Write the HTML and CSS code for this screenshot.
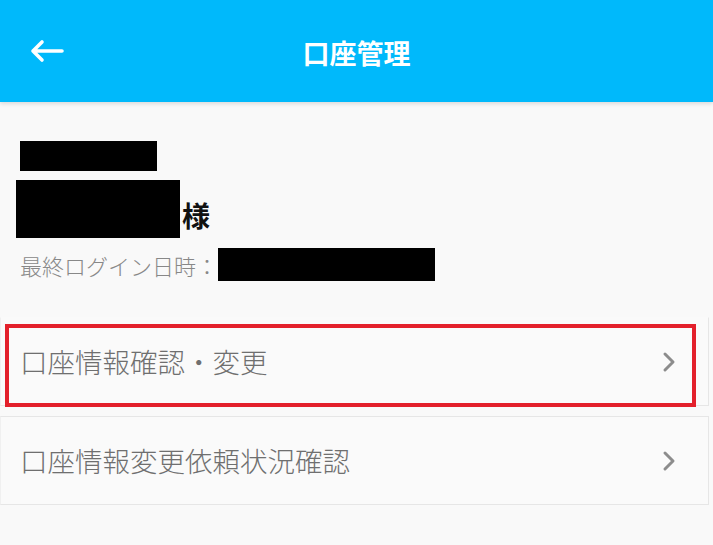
FILE: index.html
```html
<!DOCTYPE html>
<html lang="ja">
<head>
	<meta charset="UTF-8">
	<title>口座管理</title>
	<link rel="stylesheet" href="styles.css">
</head>
<body>
	<div class="header">
		<a href="javascript:;" class="back">
			<svg width="36" height="24" viewBox="0 0 36 24">
				<path d="M33 12H4M13 3L4 12L13 21" fill="none" stroke="#fff" stroke-width="3.6" stroke-linecap="round" stroke-linejoin="round"/>
			</svg>
		</a>
		<h1 class="title">口座管理</h1>
	</div>

	<div class="profile">
		<div class="mask mask-id"></div>
		<div class="name">
			<div class="mask mask-name"></div>
			<span class="sama">様</span>
		</div>
		<div class="login">
			<span class="login-label">最終ログイン日時：</span>
			<div class="mask mask-date"></div>
		</div>
	</div>

	<ul class="menu">
		<li class="menu-item first">
			<span class="menu-text">口座情報確認・変更</span>
			<svg class="chevron" width="14" height="22" viewBox="0 0 14 22">
				<path d="M3 3L11 11L3 19" fill="none" stroke="#8c8c8c" stroke-width="3" stroke-linecap="round" stroke-linejoin="round"/>
			</svg>
			<div class="highlight"></div>
		</li>
		<li class="menu-item">
			<span class="menu-text">口座情報変更依頼状況確認</span>
			<svg class="chevron" width="14" height="22" viewBox="0 0 14 22">
				<path d="M3 3L11 11L3 19" fill="none" stroke="#8c8c8c" stroke-width="3" stroke-linecap="round" stroke-linejoin="round"/>
			</svg>
		</li>
	</ul>
</body>
</html>
```

FILE: styles.css
```css
* {
	margin: 0;
	padding: 0;
	box-sizing: border-box;
}

body {
	width: 713px;
	height: 545px;
	overflow: hidden;
	background: #f9f9f9;
	font-family: "Noto Sans CJK JP", "Noto Sans", sans-serif;
}

.header {
	position: relative;
	display: flex;
	align-items: center;
	justify-content: center;
	height: 102px;
	background: #00b9fb;
	box-shadow: 0 2px 4px rgba(0,0,0,0.12);
}

.back {
	position: absolute;
	left: 29px;
	top: 39px;
	display: block;
	width: 36px;
	height: 24px;
}

.back svg {
	display: block;
}

.title {
	margin-top: 2px;
	font-size: 27px;
	font-weight: bold;
	line-height: 1;
	color: #fff;
}

.profile {
	padding: 39px 0 0 20px;
}

.mask {
	background: #000;
}

.mask-id {
	width: 137px;
	height: 30px;
}

.name {
	display: flex;
	align-items: flex-end;
	margin: 9px 0 0 -4px;
}

.mask-name {
	width: 164px;
	height: 58px;
}

.sama {
	margin: 0 0 9px 2px;
	font-size: 28px;
	font-weight: bold;
	line-height: 1;
	color: #111;
}

.login {
	display: flex;
	align-items: center;
	margin-top: 10px;
}

.login-label {
	font-size: 22px;
	font-weight: 300;
	line-height: 1;
	color: #888;
}

.mask-date {
	width: 217px;
	height: 33px;
}

.menu {
	list-style: none;
	margin-top: 36px;
}

.menu-item {
	position: relative;
	display: flex;
	align-items: center;
	justify-content: space-between;
	height: 89px;
	margin: 0 4px 10px 0;
	padding: 0 32px 0 19px;
	background: #fafafa;
	border: 1px solid #e6e6e6;
	border-left-color: #f0f0f0;
}

.menu-item.first {
	border-top-color: transparent;
}

.menu-text {
	font-size: 27.5px;
	font-weight: 300;
	line-height: 1;
	color: #6f6f6f;
}

.chevron {
	display: block;
}

.highlight {
	position: absolute;
	left: 4px;
	top: 6px;
	width: 691px;
	height: 83px;
	border: 4px solid #e3202b;
}
```
